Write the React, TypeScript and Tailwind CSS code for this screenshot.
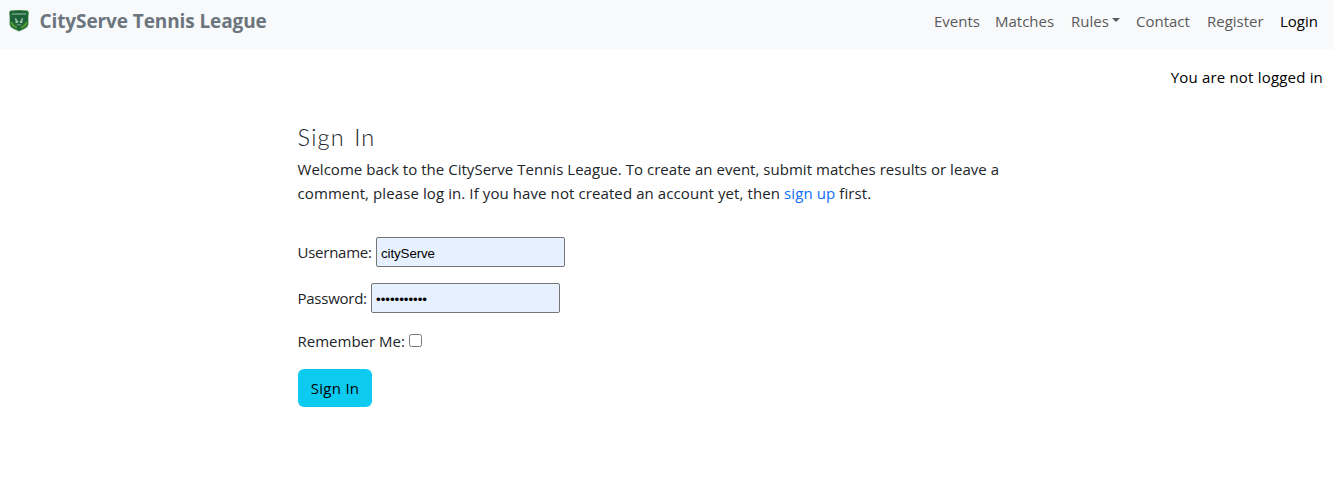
import React from "react";

function Crest() {
  return (
    <svg viewBox="0 0 20 22" className="h-[22px] w-5 shrink-0" aria-hidden="true">
      <path d="M1.4 0.6Q10-.5 18.6.6L19.9 2.2 19.4 6V14.4Q19 17.2 15.8 18.8L10 21.6 4.2 18.8Q1 17.2 .6 14.4V6L.1 2.2Z" fill="#35803e" />
      <path d="M2.2 1.4Q10 .5 17.8 1.4L18.6 2.8V13.5Q18 16.5 15 17.8L10 20.3 5 17.8Q2 16.5 1.4 13.5V2.8Z" fill="#1b6238" />
      <path d="M3.2 4h13.6" stroke="#b5cdbb" strokeWidth="1.3" strokeDasharray="1.6 .4" opacity=".75" />
      <path d="M2.2 12.2Q4 16.4 8 17.6M17.8 12.2Q16 16.4 12 17.6" fill="none" stroke="#569a2c" strokeWidth="2" />
      <path d="M6.4 8.2l1 2.6 1.8 1M13.6 8.2l-1 2.6-1.8 1M6.4 12.2h2.6M11 12.2h2.6" fill="none" stroke="#a3bfab" strokeWidth="1.5" />
      <path d="M7.8 14.8h4.4" stroke="#7fa68b" strokeWidth="1" />
    </svg>
  );
}

const links = [
  { label: "Events", width: "w-[45px]" },
  { label: "Matches", width: "w-[60px]" },
  { label: "Rules", width: "w-[49px]", caret: true },
  { label: "Contact", width: "w-[55px]" },
  { label: "Register", width: "w-[57px]" },
  { label: "Login", width: "w-[39px]", active: true },
];

export default function App() {
  return (
    <div className="h-[491px] overflow-hidden bg-white font-['Open_Sans','Noto_Sans',sans-serif] text-[15px] leading-6 text-[#212529]">
      <header className="flex h-[49px] items-start justify-between bg-[#f8f9fa] pl-[9px] pr-[15px]">
        <a href="#" className="flex items-start pt-[10px]">
          <Crest />
          <span className="-mt-[4px] ml-[10.5px] whitespace-nowrap text-[19px] font-bold leading-[30px] tracking-[-0.1px] text-[#6c757d]">CityServe Tennis League</span>
        </a>
        <nav className="flex gap-4 pt-[9px]">
          {links.map((l) => (
            <a key={l.label} href="#" className={`flex items-center whitespace-nowrap ${l.width} ${l.active ? "text-black" : "text-[#595a5b]"}`}>
              <span>{l.label}</span>
              {l.caret && <span className="-mt-[3px] ml-[3px] border-x-[4.8px] border-t-[4.8px] border-x-transparent border-t-current" />}
            </a>
          ))}
        </nav>
      </header>
      <p className="mr-[11px] mt-[16px] text-right tracking-[0.19px] text-black">You are not logged in</p>
      <main className="ml-[297.5px] w-[740px]">
        <h1 className="mt-[34px] font-['Lato',sans-serif] text-[23.5px] font-light leading-[29px] tracking-[1.25px] [word-spacing:1.5px]">Sign In</h1>
        <p className="mt-[5px] whitespace-nowrap">
          <span className="tracking-[0.03px]">Welcome back to the CityServe Tennis League. To create an event, submit matches results or leave a</span>
          <br />
          <span className="tracking-[0.095px]">comment, please log in. If you have not created an account yet, then <a href="#" className="text-[#0d6efd]">sign up</a> first.</span>
        </p>
        <form className="mt-[32px]" onSubmit={(e) => e.preventDefault()}>
          <div className="flex h-[30px] items-center">
            <label htmlFor="username" className="w-[78.5px] whitespace-nowrap tracking-[-0.25px]">Username:</label>
            <input id="username" defaultValue="cityServe" className="h-[30px] w-[189px] rounded-[2px] border border-[#767676] bg-[#e6f0ff] px-1 pt-[3px] font-['Liberation_Sans',sans-serif] text-[13.333px] tracking-[-0.1px] text-black" />
          </div>
          <div className="mt-4 flex h-[30px] items-center">
            <label htmlFor="password" className="w-[73.5px] whitespace-nowrap tracking-[-0.25px]">Password:</label>
            <input id="password" type="password" defaultValue="password123" className="h-[30px] w-[189px] rounded-[2px] border border-[#767676] bg-[#e6f0ff] px-1 pt-[3px] font-['Liberation_Sans',sans-serif] text-[13.333px] tracking-[-0.04px] text-black" />
          </div>
          <div className="mt-4 flex h-6 items-center">
            <label htmlFor="remember" className="w-[111.5px] whitespace-nowrap">Remember Me:</label>
            <input id="remember" type="checkbox" className="-mt-[2px] size-[13px]" />
          </div>
          <button className="ml-[0.5px] mt-4 h-[38px] w-[74px] whitespace-nowrap rounded-[6px] bg-[#0dcaf0] text-center tracking-[0.3px] text-black">Sign In</button>
        </form>
      </main>
    </div>
  );
}
